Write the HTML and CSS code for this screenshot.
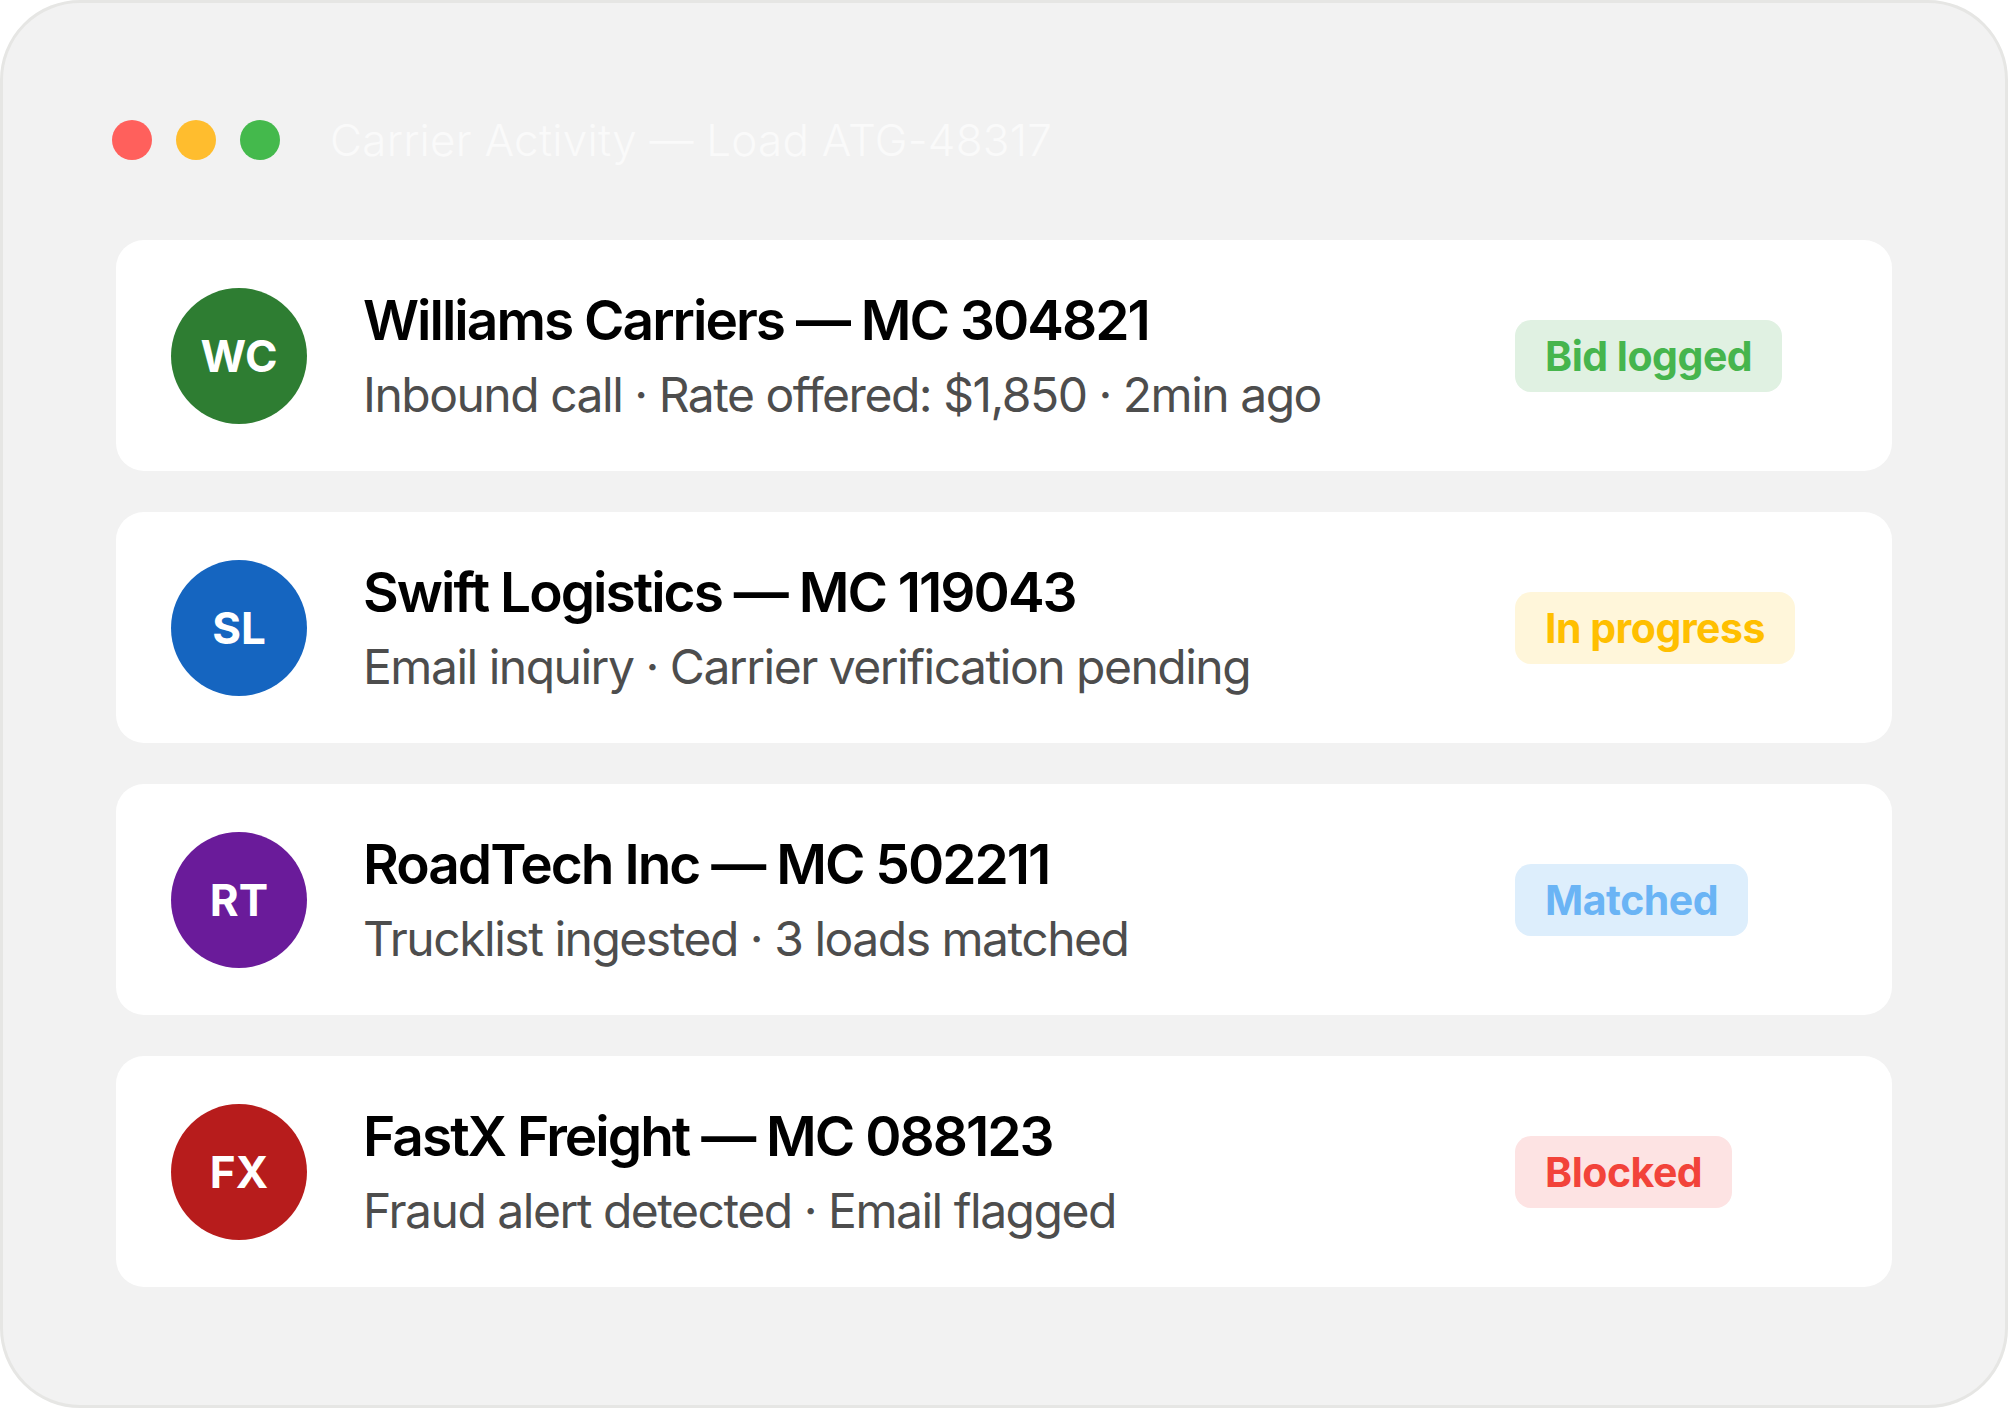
FILE: index.html
```html
<!DOCTYPE html>
<html lang="en">
<head>
<meta charset="utf-8">
<title>Carrier Activity — Load ATG-48317</title>
<link rel="stylesheet" href="styles.css">
</head>
<body>
<div class="window">
  <div class="titlebar">
    <span class="light red"></span>
    <span class="light yellow"></span>
    <span class="light green"></span>
    <span class="title">Carrier Activity — Load ATG-48317</span>
  </div>
  <div class="list">
    <div class="card">
      <div class="avatar av-green">WC</div>
      <div class="info">
        <div class="name">Williams Carriers — MC 304821</div>
        <div class="meta">Inbound call · Rate offered: $1,850 · 2min ago</div>
      </div>
      <div class="status"><span class="badge b-green">Bid logged</span></div>
    </div>
    <div class="card">
      <div class="avatar av-blue">SL</div>
      <div class="info">
        <div class="name">Swift Logistics — MC 119043</div>
        <div class="meta">Email inquiry · Carrier verification pending</div>
      </div>
      <div class="status"><span class="badge b-yellow">In progress</span></div>
    </div>
    <div class="card">
      <div class="avatar av-purple">RT</div>
      <div class="info">
        <div class="name">RoadTech Inc — MC 502211</div>
        <div class="meta">Trucklist ingested · 3 loads matched</div>
      </div>
      <div class="status"><span class="badge b-blue">Matched</span></div>
    </div>
    <div class="card">
      <div class="avatar av-red">FX</div>
      <div class="info">
        <div class="name">FastX Freight — MC 088123</div>
        <div class="meta">Fraud alert detected · Email flagged</div>
      </div>
      <div class="status"><span class="badge b-red">Blocked</span></div>
    </div>
  </div>
</div>
</body>
</html>
```

FILE: styles.css
```css
* { box-sizing: border-box; }
html, body { margin: 0; padding: 0; background: #ffffff; }
body { font-family: Inter, "Noto Sans", sans-serif; }

.window {
  width: 2008px;
  height: 1408px;
  background: #f2f2f2;
  border: 3px solid #e6e6e4;
  border-radius: 80px;
  padding-top: 97px;
  overflow: hidden;
}

.titlebar {
  height: 80px;
  display: flex;
  align-items: center;
  padding-left: 109px;
  margin-bottom: 60px;
}
.light {
  width: 40px;
  height: 40px;
  border-radius: 50%;
  margin-right: 24px;
  flex: none;
}
.light.red { background: #ff605c; }
.light.yellow { background: #ffbd2e; }
.light.green { background: #44b94c; margin-right: 50px; }
.title {
  font-family: Inter, sans-serif;
  font-weight: 300;
  font-size: 44px;
  color: #fafafa;
  letter-spacing: 0.005em;
  white-space: nowrap;
}

.list {
  display: flex;
  flex-direction: column;
  gap: 41px;
  padding: 0 113px;
}

.card {
  background: #ffffff;
  border-radius: 28px;
  height: 231px;
  padding: 0 56px 0 55px;
  display: grid;
  grid-template-columns: 136px 1fr 321px;
  column-gap: 56px;
  align-items: center;
}

.avatar {
  width: 136px;
  height: 136px;
  border-radius: 50%;
  display: flex;
  align-items: center;
  justify-content: center;
  color: #ffffff;
  font-weight: 700;
  font-size: 44px;
}
.av-green { background: #2e7d32; }
.av-blue { background: #1565c0; }
.av-purple { background: #6a1b9a; }
.av-red { background: #b71c1c; }

.info { display: flex; flex-direction: column; gap: 14px; }
.name {
  font-size: 55px;
  line-height: 64px;
  font-weight: 600;
  color: #000000;
  letter-spacing: -0.036em;
  white-space: nowrap;
}
.meta {
  font-size: 48px;
  line-height: 58px;
  font-weight: 400;
  color: #4d4d4d;
  letter-spacing: -0.031em;
  white-space: nowrap;
}

.status { display: flex; justify-content: flex-start; }
.badge {
  display: inline-block;
  height: 72px;
  line-height: 72px;
  padding: 0 30px;
  border-radius: 16px;
  font-size: 41px;
  font-weight: 700;
  letter-spacing: -0.012em;
  white-space: nowrap;
}
.b-green { background: #e0f1e2; color: #46b54d; }
.b-yellow { background: #fff6da; color: #ffbf00; }
.b-blue { background: #ddeefc; color: #6ab4f5; }
.b-red { background: #fde3e3; color: #f2433a; }
```
